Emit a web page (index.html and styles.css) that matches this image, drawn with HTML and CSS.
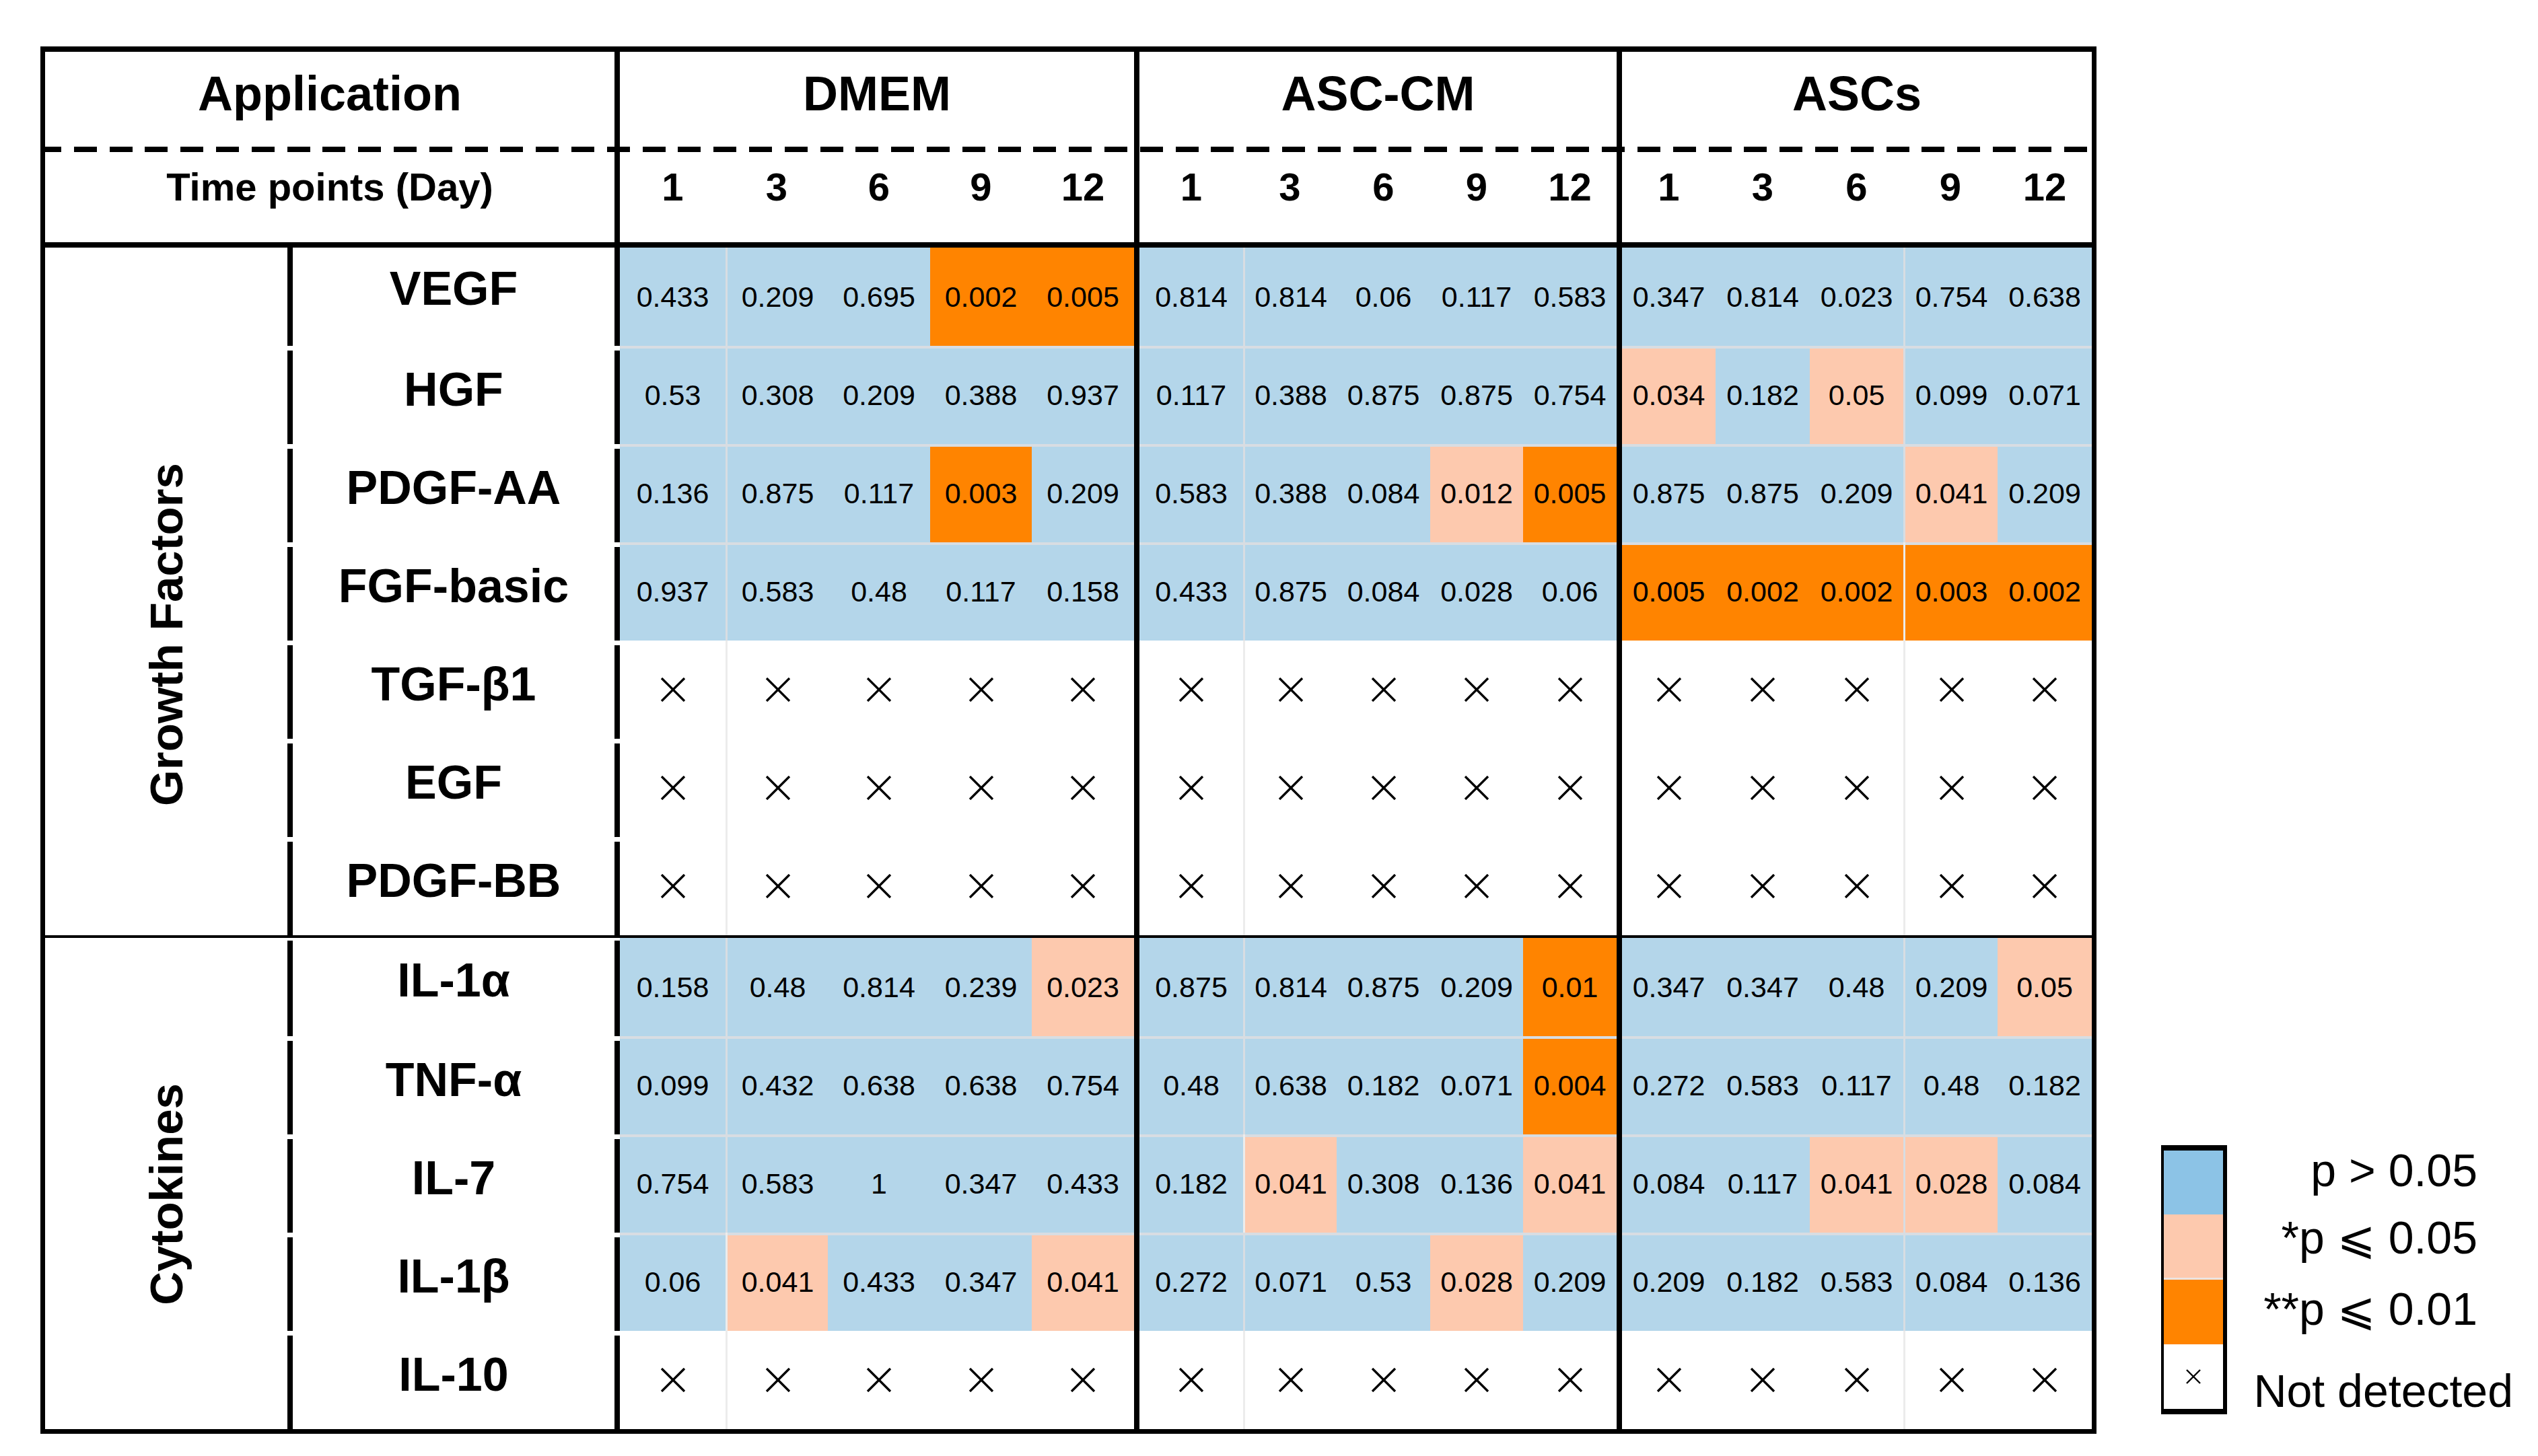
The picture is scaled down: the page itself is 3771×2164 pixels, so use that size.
FILE: index.html
```html
<!DOCTYPE html>
<html lang="en">
<head>
<meta charset="utf-8">
<title>Growth factors and cytokines – p values</title>
<link rel="stylesheet" href="styles.css">
</head>
<body>
<div class="page">
  <div class="tbl">
    <div class="hd hd-app">Application</div>
    <div class="hd hd-grp">DMEM</div>
    <div class="hd hd-grp">ASC-CM</div>
    <div class="hd hd-grp">ASCs</div>
    <div class="dash"></div>
    <div class="days">
      <div class="day day-title">Time points (Day)</div>
      <div class="day">1</div><div class="day">3</div><div class="day">6</div><div class="day">9</div><div class="day">12</div>
      <div class="day">1</div><div class="day">3</div><div class="day">6</div><div class="day">9</div><div class="day">12</div>
      <div class="day">1</div><div class="day">3</div><div class="day">6</div><div class="day">9</div><div class="day">12</div>
    </div>

    <div class="grp grp-gf"><span>Growth Factors</span></div>
    <div class="row">
      <div class="lab">VEGF</div>
      <div class="c b">0.433</div><div class="c b">0.209</div><div class="c b">0.695</div><div class="c o">0.002</div><div class="c o">0.005</div>
      <div class="c b">0.814</div><div class="c b">0.814</div><div class="c b">0.06</div><div class="c b">0.117</div><div class="c b">0.583</div>
      <div class="c b">0.347</div><div class="c b">0.814</div><div class="c b">0.023</div><div class="c b">0.754</div><div class="c b">0.638</div>
    </div>
    <div class="row">
      <div class="lab">HGF</div>
      <div class="c b">0.53</div><div class="c b">0.308</div><div class="c b">0.209</div><div class="c b">0.388</div><div class="c b">0.937</div>
      <div class="c b">0.117</div><div class="c b">0.388</div><div class="c b">0.875</div><div class="c b">0.875</div><div class="c b">0.754</div>
      <div class="c p">0.034</div><div class="c b">0.182</div><div class="c p">0.05</div><div class="c b">0.099</div><div class="c b">0.071</div>
    </div>
    <div class="row">
      <div class="lab">PDGF-AA</div>
      <div class="c b">0.136</div><div class="c b">0.875</div><div class="c b">0.117</div><div class="c o">0.003</div><div class="c b">0.209</div>
      <div class="c b">0.583</div><div class="c b">0.388</div><div class="c b">0.084</div><div class="c p">0.012</div><div class="c o">0.005</div>
      <div class="c b">0.875</div><div class="c b">0.875</div><div class="c b">0.209</div><div class="c p">0.041</div><div class="c b">0.209</div>
    </div>
    <div class="row">
      <div class="lab">FGF-basic</div>
      <div class="c b">0.937</div><div class="c b">0.583</div><div class="c b">0.48</div><div class="c b">0.117</div><div class="c b">0.158</div>
      <div class="c b">0.433</div><div class="c b">0.875</div><div class="c b">0.084</div><div class="c b">0.028</div><div class="c b">0.06</div>
      <div class="c o">0.005</div><div class="c o">0.002</div><div class="c o">0.002</div><div class="c o">0.003</div><div class="c o">0.002</div>
    </div>
    <div class="row">
      <div class="lab">TGF-β1</div>
      <div class="c"><svg class="x" viewBox="0 0 38 36"><line x1="2" y1="1" x2="36" y2="35"/><line x1="36" y1="1" x2="2" y2="35"/></svg></div>
      <div class="c"><svg class="x" viewBox="0 0 38 36"><line x1="2" y1="1" x2="36" y2="35"/><line x1="36" y1="1" x2="2" y2="35"/></svg></div>
      <div class="c"><svg class="x" viewBox="0 0 38 36"><line x1="2" y1="1" x2="36" y2="35"/><line x1="36" y1="1" x2="2" y2="35"/></svg></div>
      <div class="c"><svg class="x" viewBox="0 0 38 36"><line x1="2" y1="1" x2="36" y2="35"/><line x1="36" y1="1" x2="2" y2="35"/></svg></div>
      <div class="c"><svg class="x" viewBox="0 0 38 36"><line x1="2" y1="1" x2="36" y2="35"/><line x1="36" y1="1" x2="2" y2="35"/></svg></div>
      <div class="c"><svg class="x" viewBox="0 0 38 36"><line x1="2" y1="1" x2="36" y2="35"/><line x1="36" y1="1" x2="2" y2="35"/></svg></div>
      <div class="c"><svg class="x" viewBox="0 0 38 36"><line x1="2" y1="1" x2="36" y2="35"/><line x1="36" y1="1" x2="2" y2="35"/></svg></div>
      <div class="c"><svg class="x" viewBox="0 0 38 36"><line x1="2" y1="1" x2="36" y2="35"/><line x1="36" y1="1" x2="2" y2="35"/></svg></div>
      <div class="c"><svg class="x" viewBox="0 0 38 36"><line x1="2" y1="1" x2="36" y2="35"/><line x1="36" y1="1" x2="2" y2="35"/></svg></div>
      <div class="c"><svg class="x" viewBox="0 0 38 36"><line x1="2" y1="1" x2="36" y2="35"/><line x1="36" y1="1" x2="2" y2="35"/></svg></div>
      <div class="c"><svg class="x" viewBox="0 0 38 36"><line x1="2" y1="1" x2="36" y2="35"/><line x1="36" y1="1" x2="2" y2="35"/></svg></div>
      <div class="c"><svg class="x" viewBox="0 0 38 36"><line x1="2" y1="1" x2="36" y2="35"/><line x1="36" y1="1" x2="2" y2="35"/></svg></div>
      <div class="c"><svg class="x" viewBox="0 0 38 36"><line x1="2" y1="1" x2="36" y2="35"/><line x1="36" y1="1" x2="2" y2="35"/></svg></div>
      <div class="c"><svg class="x" viewBox="0 0 38 36"><line x1="2" y1="1" x2="36" y2="35"/><line x1="36" y1="1" x2="2" y2="35"/></svg></div>
      <div class="c"><svg class="x" viewBox="0 0 38 36"><line x1="2" y1="1" x2="36" y2="35"/><line x1="36" y1="1" x2="2" y2="35"/></svg></div>
    </div>
    <div class="row">
      <div class="lab">EGF</div>
      <div class="c"><svg class="x" viewBox="0 0 38 36"><line x1="2" y1="1" x2="36" y2="35"/><line x1="36" y1="1" x2="2" y2="35"/></svg></div>
      <div class="c"><svg class="x" viewBox="0 0 38 36"><line x1="2" y1="1" x2="36" y2="35"/><line x1="36" y1="1" x2="2" y2="35"/></svg></div>
      <div class="c"><svg class="x" viewBox="0 0 38 36"><line x1="2" y1="1" x2="36" y2="35"/><line x1="36" y1="1" x2="2" y2="35"/></svg></div>
      <div class="c"><svg class="x" viewBox="0 0 38 36"><line x1="2" y1="1" x2="36" y2="35"/><line x1="36" y1="1" x2="2" y2="35"/></svg></div>
      <div class="c"><svg class="x" viewBox="0 0 38 36"><line x1="2" y1="1" x2="36" y2="35"/><line x1="36" y1="1" x2="2" y2="35"/></svg></div>
      <div class="c"><svg class="x" viewBox="0 0 38 36"><line x1="2" y1="1" x2="36" y2="35"/><line x1="36" y1="1" x2="2" y2="35"/></svg></div>
      <div class="c"><svg class="x" viewBox="0 0 38 36"><line x1="2" y1="1" x2="36" y2="35"/><line x1="36" y1="1" x2="2" y2="35"/></svg></div>
      <div class="c"><svg class="x" viewBox="0 0 38 36"><line x1="2" y1="1" x2="36" y2="35"/><line x1="36" y1="1" x2="2" y2="35"/></svg></div>
      <div class="c"><svg class="x" viewBox="0 0 38 36"><line x1="2" y1="1" x2="36" y2="35"/><line x1="36" y1="1" x2="2" y2="35"/></svg></div>
      <div class="c"><svg class="x" viewBox="0 0 38 36"><line x1="2" y1="1" x2="36" y2="35"/><line x1="36" y1="1" x2="2" y2="35"/></svg></div>
      <div class="c"><svg class="x" viewBox="0 0 38 36"><line x1="2" y1="1" x2="36" y2="35"/><line x1="36" y1="1" x2="2" y2="35"/></svg></div>
      <div class="c"><svg class="x" viewBox="0 0 38 36"><line x1="2" y1="1" x2="36" y2="35"/><line x1="36" y1="1" x2="2" y2="35"/></svg></div>
      <div class="c"><svg class="x" viewBox="0 0 38 36"><line x1="2" y1="1" x2="36" y2="35"/><line x1="36" y1="1" x2="2" y2="35"/></svg></div>
      <div class="c"><svg class="x" viewBox="0 0 38 36"><line x1="2" y1="1" x2="36" y2="35"/><line x1="36" y1="1" x2="2" y2="35"/></svg></div>
      <div class="c"><svg class="x" viewBox="0 0 38 36"><line x1="2" y1="1" x2="36" y2="35"/><line x1="36" y1="1" x2="2" y2="35"/></svg></div>
    </div>
    <div class="row">
      <div class="lab">PDGF-BB</div>
      <div class="c"><svg class="x" viewBox="0 0 38 36"><line x1="2" y1="1" x2="36" y2="35"/><line x1="36" y1="1" x2="2" y2="35"/></svg></div>
      <div class="c"><svg class="x" viewBox="0 0 38 36"><line x1="2" y1="1" x2="36" y2="35"/><line x1="36" y1="1" x2="2" y2="35"/></svg></div>
      <div class="c"><svg class="x" viewBox="0 0 38 36"><line x1="2" y1="1" x2="36" y2="35"/><line x1="36" y1="1" x2="2" y2="35"/></svg></div>
      <div class="c"><svg class="x" viewBox="0 0 38 36"><line x1="2" y1="1" x2="36" y2="35"/><line x1="36" y1="1" x2="2" y2="35"/></svg></div>
      <div class="c"><svg class="x" viewBox="0 0 38 36"><line x1="2" y1="1" x2="36" y2="35"/><line x1="36" y1="1" x2="2" y2="35"/></svg></div>
      <div class="c"><svg class="x" viewBox="0 0 38 36"><line x1="2" y1="1" x2="36" y2="35"/><line x1="36" y1="1" x2="2" y2="35"/></svg></div>
      <div class="c"><svg class="x" viewBox="0 0 38 36"><line x1="2" y1="1" x2="36" y2="35"/><line x1="36" y1="1" x2="2" y2="35"/></svg></div>
      <div class="c"><svg class="x" viewBox="0 0 38 36"><line x1="2" y1="1" x2="36" y2="35"/><line x1="36" y1="1" x2="2" y2="35"/></svg></div>
      <div class="c"><svg class="x" viewBox="0 0 38 36"><line x1="2" y1="1" x2="36" y2="35"/><line x1="36" y1="1" x2="2" y2="35"/></svg></div>
      <div class="c"><svg class="x" viewBox="0 0 38 36"><line x1="2" y1="1" x2="36" y2="35"/><line x1="36" y1="1" x2="2" y2="35"/></svg></div>
      <div class="c"><svg class="x" viewBox="0 0 38 36"><line x1="2" y1="1" x2="36" y2="35"/><line x1="36" y1="1" x2="2" y2="35"/></svg></div>
      <div class="c"><svg class="x" viewBox="0 0 38 36"><line x1="2" y1="1" x2="36" y2="35"/><line x1="36" y1="1" x2="2" y2="35"/></svg></div>
      <div class="c"><svg class="x" viewBox="0 0 38 36"><line x1="2" y1="1" x2="36" y2="35"/><line x1="36" y1="1" x2="2" y2="35"/></svg></div>
      <div class="c"><svg class="x" viewBox="0 0 38 36"><line x1="2" y1="1" x2="36" y2="35"/><line x1="36" y1="1" x2="2" y2="35"/></svg></div>
      <div class="c"><svg class="x" viewBox="0 0 38 36"><line x1="2" y1="1" x2="36" y2="35"/><line x1="36" y1="1" x2="2" y2="35"/></svg></div>
    </div>

    <div class="split"></div>

    <div class="grp grp-cy"><span>Cytokines</span></div>
    <div class="row">
      <div class="lab">IL-1α</div>
      <div class="c b">0.158</div><div class="c b">0.48</div><div class="c b">0.814</div><div class="c b">0.239</div><div class="c p">0.023</div>
      <div class="c b">0.875</div><div class="c b">0.814</div><div class="c b">0.875</div><div class="c b">0.209</div><div class="c o">0.01</div>
      <div class="c b">0.347</div><div class="c b">0.347</div><div class="c b">0.48</div><div class="c b">0.209</div><div class="c p">0.05</div>
    </div>
    <div class="row">
      <div class="lab">TNF-α</div>
      <div class="c b">0.099</div><div class="c b">0.432</div><div class="c b">0.638</div><div class="c b">0.638</div><div class="c b">0.754</div>
      <div class="c b">0.48</div><div class="c b">0.638</div><div class="c b">0.182</div><div class="c b">0.071</div><div class="c o">0.004</div>
      <div class="c b">0.272</div><div class="c b">0.583</div><div class="c b">0.117</div><div class="c b">0.48</div><div class="c b">0.182</div>
    </div>
    <div class="row">
      <div class="lab">IL-7</div>
      <div class="c b">0.754</div><div class="c b">0.583</div><div class="c b">1</div><div class="c b">0.347</div><div class="c b">0.433</div>
      <div class="c b">0.182</div><div class="c p">0.041</div><div class="c b">0.308</div><div class="c b">0.136</div><div class="c p">0.041</div>
      <div class="c b">0.084</div><div class="c b">0.117</div><div class="c p">0.041</div><div class="c p">0.028</div><div class="c b">0.084</div>
    </div>
    <div class="row">
      <div class="lab">IL-1β</div>
      <div class="c b">0.06</div><div class="c p">0.041</div><div class="c b">0.433</div><div class="c b">0.347</div><div class="c p">0.041</div>
      <div class="c b">0.272</div><div class="c b">0.071</div><div class="c b">0.53</div><div class="c p">0.028</div><div class="c b">0.209</div>
      <div class="c b">0.209</div><div class="c b">0.182</div><div class="c b">0.583</div><div class="c b">0.084</div><div class="c b">0.136</div>
    </div>
    <div class="row">
      <div class="lab">IL-10</div>
      <div class="c"><svg class="x" viewBox="0 0 38 36"><line x1="2" y1="1" x2="36" y2="35"/><line x1="36" y1="1" x2="2" y2="35"/></svg></div>
      <div class="c"><svg class="x" viewBox="0 0 38 36"><line x1="2" y1="1" x2="36" y2="35"/><line x1="36" y1="1" x2="2" y2="35"/></svg></div>
      <div class="c"><svg class="x" viewBox="0 0 38 36"><line x1="2" y1="1" x2="36" y2="35"/><line x1="36" y1="1" x2="2" y2="35"/></svg></div>
      <div class="c"><svg class="x" viewBox="0 0 38 36"><line x1="2" y1="1" x2="36" y2="35"/><line x1="36" y1="1" x2="2" y2="35"/></svg></div>
      <div class="c"><svg class="x" viewBox="0 0 38 36"><line x1="2" y1="1" x2="36" y2="35"/><line x1="36" y1="1" x2="2" y2="35"/></svg></div>
      <div class="c"><svg class="x" viewBox="0 0 38 36"><line x1="2" y1="1" x2="36" y2="35"/><line x1="36" y1="1" x2="2" y2="35"/></svg></div>
      <div class="c"><svg class="x" viewBox="0 0 38 36"><line x1="2" y1="1" x2="36" y2="35"/><line x1="36" y1="1" x2="2" y2="35"/></svg></div>
      <div class="c"><svg class="x" viewBox="0 0 38 36"><line x1="2" y1="1" x2="36" y2="35"/><line x1="36" y1="1" x2="2" y2="35"/></svg></div>
      <div class="c"><svg class="x" viewBox="0 0 38 36"><line x1="2" y1="1" x2="36" y2="35"/><line x1="36" y1="1" x2="2" y2="35"/></svg></div>
      <div class="c"><svg class="x" viewBox="0 0 38 36"><line x1="2" y1="1" x2="36" y2="35"/><line x1="36" y1="1" x2="2" y2="35"/></svg></div>
      <div class="c"><svg class="x" viewBox="0 0 38 36"><line x1="2" y1="1" x2="36" y2="35"/><line x1="36" y1="1" x2="2" y2="35"/></svg></div>
      <div class="c"><svg class="x" viewBox="0 0 38 36"><line x1="2" y1="1" x2="36" y2="35"/><line x1="36" y1="1" x2="2" y2="35"/></svg></div>
      <div class="c"><svg class="x" viewBox="0 0 38 36"><line x1="2" y1="1" x2="36" y2="35"/><line x1="36" y1="1" x2="2" y2="35"/></svg></div>
      <div class="c"><svg class="x" viewBox="0 0 38 36"><line x1="2" y1="1" x2="36" y2="35"/><line x1="36" y1="1" x2="2" y2="35"/></svg></div>
      <div class="c"><svg class="x" viewBox="0 0 38 36"><line x1="2" y1="1" x2="36" y2="35"/><line x1="36" y1="1" x2="2" y2="35"/></svg></div>
    </div>
  </div>

  <div class="legend">
    <div class="legend-box">
      <div class="sw sw-b"></div>
      <div class="sw sw-p"></div>
      <div class="sw sw-o"></div>
      <div class="sw sw-n"><svg class="x-sm" viewBox="0 0 24 22"><line x1="2" y1="1" x2="22" y2="21"/><line x1="22" y1="1" x2="2" y2="21"/></svg></div>
    </div>
    <div class="legend-labels">
      <div class="ll">p &gt; 0.05</div>
      <div class="ll">*p ⩽ 0.05</div>
      <div class="ll">**p ⩽ 0.01</div>
      <div class="ll ll-nd">Not detected</div>
    </div>
  </div>
</div>
</body>
</html>
```
FILE: styles.css
```css
* {
  box-sizing: border-box;
}

html,
body {
  margin: 0;
  background: #fff;
}

body {
  font-family: "Liberation Sans", Arial, "DejaVu Sans", sans-serif;
  color: #000;
}

.page {
  display: flex;
  align-items: flex-end;
  padding: 69px 0 0 60px;
}

/* ---------- table ---------- */
.tbl {
  display: grid;
  grid-template-columns:
    360px 494px
    157px 152px 152px 151px 152px
    162px 139px 139px 138px 139px
    147px 140px 139px 140px 140px;
  grid-template-rows: 141px 8px 142px repeat(7, 146px) 4px repeat(5, 146px);
  border: 7px solid #000;
  border-top-width: 8px;
  flex: none;
}

.hd {
  display: flex;
  align-items: center;
  justify-content: center;
  font-weight: 700;
  font-size: 72px;
  line-height: 1;
  padding-bottom: 18px;
}

.hd-app {
  grid-column: span 2;
  border-right: 8px solid #000;
}

.hd-grp {
  grid-column: span 5;
}

.hd-grp + .hd-grp {
  border-left: 8px solid #000;
}

.dash {
  grid-column: 1 / -1;
  background:
    linear-gradient(#000, #000) 1618px 0 / 8px 100% no-repeat,
    repeating-linear-gradient(90deg, #000 -10px 24px, transparent 24px 42.8px);
}

.days {
  display: contents;
}

.day {
  display: flex;
  align-items: center;
  justify-content: center;
  font-weight: 700;
  font-size: 58px;
  line-height: 1;
  padding-bottom: 31px;
  border-bottom: 8px solid #000;
}

.day-title {
  grid-column: span 2;
  border-right: 8px solid #000;
}

.days > :nth-child(7),
.days > :nth-child(12) {
  border-left: 8px solid #000;
}

/* group labels */
.grp {
  display: flex;
  align-items: center;
  justify-content: center;
  font-weight: 700;
  font-size: 69px;
}

.grp span {
  writing-mode: vertical-rl;
  transform: rotate(180deg);
  line-height: 1;
  white-space: nowrap;
}

.grp-gf {
  grid-row: span 7;
  padding-top: 128px;
}

.grp-cy {
  grid-row: span 5;
  padding-top: 32px;
}

.split {
  grid-column: 1 / -1;
  background: #000;
}

/* body rows */
.row {
  display: contents;
}

.lab {
  display: flex;
  align-items: center;
  justify-content: center;
  font-weight: 700;
  font-size: 70px;
  line-height: 1;
  padding-bottom: 24px;
  border-left: 8px solid #000;
  border-right: 8px solid #000;
  white-space: nowrap;
}

.row + .row > .lab {
  margin-top: 7px;
}

.grp-cy + .row > .lab {
  margin-top: 4px;
}

.c {
  display: flex;
  align-items: center;
  justify-content: center;
  font-size: 43px;
  line-height: 1;
}

.row + .row > .b,
.row + .row > .p,
.row + .row > .o {
  box-shadow: inset 0 4px 0 #d8dde2;
}

.row > :nth-child(3),
.row > :nth-child(8),
.row > :nth-child(15) {
  border-left: 3px solid #ececec;
}

.row > .b:nth-child(3),
.row > .b:nth-child(8),
.row > .b:nth-child(15),
.row > .p:nth-child(15) {
  border-left-color: #d8dde2;
}

.row > :nth-child(7),
.row > :nth-child(12) {
  border-left: 8px solid #000;
}

.b {
  background: #b4d6ea;
}

.p {
  background: #fdc9ae;
}

.o {
  background: #ff8400;
}

.x {
  width: 38px;
  height: 36px;
  stroke: #000;
  stroke-width: 3.4;
  fill: none;
}

/* ---------- legend ---------- */
.legend {
  display: flex;
  align-items: flex-start;
  margin: 0 0 29px 96px;
  flex: none;
}

.legend-box {
  width: 98px;
  border: 8px solid #000;
  border-left-width: 4px;
  border-right-width: 6px;
  display: flex;
  flex-direction: column;
}

.sw {
  height: 96px;
}

.sw-b {
  height: 95px;
  background: #8cc3e6;
}

.sw-p {
  height: 97px;
  background: #fdc9ae;
  border-bottom: 3px solid #ece4e0;
}

.sw-o {
  background: #ff8400;
}

.sw-n {
  display: flex;
  align-items: center;
  justify-content: center;
  background: #fff;
}

.x-sm {
  width: 24px;
  height: 22px;
  stroke: #000;
  stroke-width: 2.4;
  fill: none;
}

.legend-labels {
  margin-left: 39px;
  width: 386px;
  display: grid;
  grid-template-rows: 100px 106px 122px 68px;
  padding-top: 3px;
  font-size: 68px;
  line-height: 68px;
  text-align: right;
}

.ll {
  padding-right: 53px;
  white-space: nowrap;
}

.ll-nd {
  padding-right: 0;
}
```
